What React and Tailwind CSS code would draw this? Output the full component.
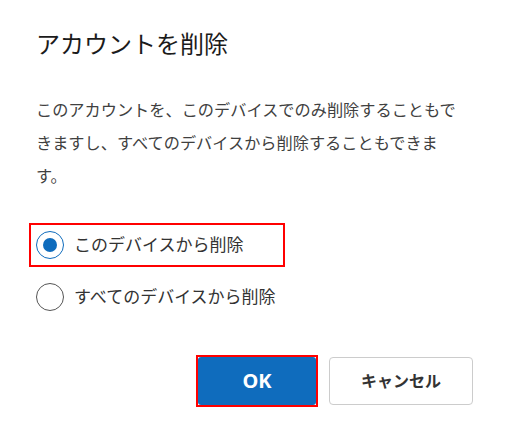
import { useState } from 'react'

const fontStack = { fontFamily: '"Noto Sans", "Noto Sans CJK JP", sans-serif' }

const RadioRow = ({ checked, label, highlighted, onSelect }) => (
  <button
    type="button"
    onClick={onSelect}
    className={`flex items-center gap-[10px] w-[256px] h-[44px] pl-[5px] border-2 text-left ${
      highlighted ? 'border-[#ff0000]' : 'border-transparent'
    }`}
  >
    <span
      className={`flex items-center justify-center w-[28px] h-[28px] rounded-full border ${
        checked ? 'border-[#0f6cbd]' : 'border-[#555555]'
      }`}
    >
      {checked && <span className="w-[14px] h-[14px] rounded-full bg-[#0f6cbd]" />}
    </span>
    <span className="text-[17px] leading-[24px] text-[#333333]">{label}</span>
  </button>
)

const App = () => {
  const [luaChon, setLuaChon] = useState('device')

  return (
    <div className="w-[510px] h-[441px] bg-white px-[36px] pt-[26px]" style={fontStack}>
      <h1 className="text-[24px] leading-[36px] text-[#1b1b1b] font-normal">アカウントを削除</h1>

      <p className="mt-[32px] text-[16.2px] leading-[33px] text-[#404040] whitespace-nowrap">
        このアカウントを、このデバイスでのみ削除することもで
        <br />
        きますし、すべてのデバイスから削除することもできま
        <br />
        す。
      </p>

      <div className="mt-[30px] ml-[-7px] flex flex-col gap-[8px]">
        <RadioRow
          checked={luaChon === 'device'}
          highlighted
          label="このデバイスから削除"
          onSelect={() => setLuaChon('device')}
        />
        <RadioRow
          checked={luaChon === 'all'}
          label="すべてのデバイスから削除"
          onSelect={() => setLuaChon('all')}
        />
      </div>

      <div className="mt-[36px] mr-[1px] flex justify-end items-center gap-[11px]">
        <div className="border-2 border-[#ff0000]">
          <button
            type="button"
            className="w-[118px] h-[48px] rounded-[3px] bg-[#0f6cbd] text-white text-[20px] font-bold"
          >
            OK
          </button>
        </div>
        <button
          type="button"
          className="w-[144px] h-[48px] rounded-[4px] border border-[#cccccc] bg-white text-[#333333] text-[16px] font-bold"
        >
          キャンセル
        </button>
      </div>
    </div>
  )
}

export default App
